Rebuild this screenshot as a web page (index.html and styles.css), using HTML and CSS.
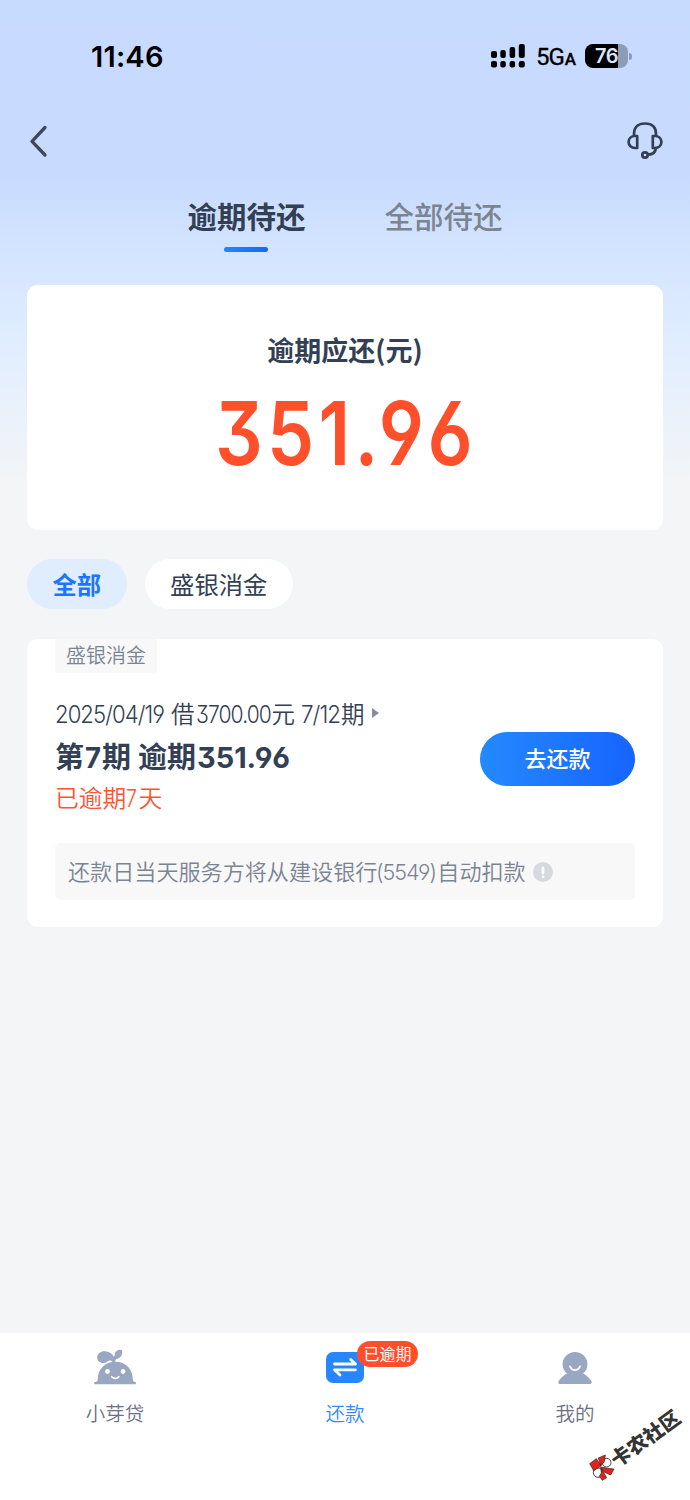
FILE: index.html
```html
<!DOCTYPE html>
<html lang="zh-CN">
<head>
<meta charset="utf-8">
<title>还款</title>
<link rel="stylesheet" href="styles.css">
</head>
<body>
<div class="app">
  <header class="status">
    <span class="clock">11:46</span>
    <div class="status-right">
      <svg class="signal" width="34" height="24" viewBox="0 0 34 24"><rect x="0" y="7" width="6" height="7" rx="2"/><rect x="9.3" y="6" width="5.5" height="8" rx="2"/><rect x="18.6" y="3" width="5.5" height="11" rx="2"/><rect x="27.8" y="0" width="6" height="14" rx="2"/><rect x="0" y="17" width="6" height="6.5" rx="2"/><rect x="9.3" y="17" width="5.5" height="6.5" rx="2"/><rect x="18.6" y="17" width="5.5" height="6.5" rx="2"/><rect x="27.8" y="17" width="6" height="6.5" rx="2"/></svg>
      <span class="network">5G<small>A</small></span>
      <span class="battery"><span>76</span></span><i class="battery-tip"></i>
    </div>
  </header>
  <nav class="toolbar">
    <svg width="20" height="34" viewBox="0 0 20 34" fill="none" stroke="#414855" stroke-width="3.3" stroke-linecap="round" stroke-linejoin="round"><path d="M17 3.5 4 17.3 17 31"/></svg>
    <svg width="36" height="38" viewBox="0 0 36 38" fill="none" stroke="#323f53" stroke-width="2.7" stroke-linecap="round" stroke-linejoin="round"><path d="M7 13v-1C7 5 11 1.500 18 1.500S29 5 29 12v1"/><path d="M10.2 14v12H8C4.4 26 1.600 23.500 1.600 20S4.400 14 8 14Z"/><path d="M25.800 14v12H28c3.600 0 6.400-2.500 6.400-6s-2.800-6-6.400-6Z"/><path d="M28.800 26.500c-.5 4.200-3 6-7.600 6.200"/><circle cx="18" cy="33" r="2.700"/></svg>
  </nav>
  <div class="tabs"><div class="tab active">逾期待还</div><div class="tab">全部待还</div></div>
  <main>
    <section class="summary">
      <h1>逾期应还(元)</h1>
      <svg class="amount" width="254" height="64" viewBox="0 0 254 64"><text x="-3" y="64" textLength="262" lengthAdjust="spacingAndGlyphs">351.96</text></svg>
    </section>
    <div class="filters"><span class="chip selected">全部</span><span class="chip">盛银消金</span></div>
    <section class="bill">
      <span class="lender">盛银消金</span>
      <div class="bill-row">
        <div class="details">
          <div class="loan"><svg class="num" width="110" height="17"><text y="17" textLength="109" lengthAdjust="spacingAndGlyphs">2025/04/19</text></svg><span class="word">借</span><svg class="num" width="77" height="17"><text x="1" y="17" textLength="75" lengthAdjust="spacingAndGlyphs">3700.00</text></svg><span>元</span><svg class="num part" width="40" height="17"><text y="17" textLength="39" lengthAdjust="spacingAndGlyphs">7/12</text></svg><span>期</span><i class="arrow"></i></div>
          <div class="term"><span>第</span><svg class="num" width="18" height="21"><text x="1" y="21" textLength="16" lengthAdjust="spacingAndGlyphs">7</text></svg><span>期</span><span class="word">逾期</span><svg class="num" width="94" height="21"><text x="1" y="21" textLength="93" lengthAdjust="spacingAndGlyphs">351.96</text></svg></div>
          <div class="late"><span>已逾期</span><svg class="num" width="12" height="17"><text y="17" textLength="11" lengthAdjust="spacingAndGlyphs">7</text></svg><span>天</span></div>
        </div>
        <button class="pay">去还款</button>
      </div>
      <div class="notice"><span>还款日当天服务方将从建设银行</span><svg class="num" width="60" height="16"><text x="-1" y="16" textLength="60" lengthAdjust="spacingAndGlyphs">(5549)</text></svg><span>自动扣款</span>
        <svg class="info" width="20" height="20" viewBox="0 0 20 20"><circle cx="10" cy="10" r="10" fill="#d6d9df"/><path d="M10 6v5" stroke="#fff" stroke-width="2.8" stroke-linecap="round"/><circle cx="10" cy="14.8" r="1.5" fill="#fff"/></svg>
      </div>
    </section>
  </main>
  <footer class="tabbar">
    <div class="item"><svg width="42" height="36" viewBox="0 0 42 36"><g fill="#99a7c2"><path d="M1.2 33c1.5 0 2.6-.8 2.600-3C3.800 20 11 12.700 21.300 12.700S38.800 20 38.800 30c0 2.200 1 3 2.200 3 1.300 0 1.300 2.300 0 2.300H1.200C-.2 35.300-.2 33 1.200 33Z"/><path d="M20.500 14.500C22.500 7.500 16.500 2.300 10.800 2.300 6.500 2.300 3.200 5 3.200 8.500c0 3.200 2.600 5.500 6 5.500 4.300 0 4.800-3.600 8-2.300 1.500.6 1.300 1.800 1.300 3Z"/><path d="M19.500 15c-1-4.500-.5-7 1.300-8.500C20.200 3 23.500.2 27.800 1c1.500 4.500-1.500 9-5.800 9-1 1.500-.8 3-.8 5Z"/></g><g fill="#fff"><circle cx="13.500" cy="22.500" r="2.400"/><circle cx="29" cy="22.500" r="2.400"/></g><path d="M17.700 27.700c1.800 2.200 5.300 2.200 7.100 0" fill="none" stroke="#fff" stroke-width="1.800" stroke-linecap="round"/></svg><span>小芽贷</span></div>
    <div class="item current"><span class="icon"><svg width="40" height="36" viewBox="0 0 40 36"><rect x="1" y="3" width="38" height="31" rx="7" fill="#2786ff"/><path d="M9.500 15H30.500L25.700 10.500M30.500 20.800H9.500L15 26" fill="none" stroke="#fff" stroke-width="2.800" stroke-linecap="round" stroke-linejoin="round"/></svg><b class="badge">已逾期</b></span><span>还款</span></div>
    <div class="item"><svg width="34" height="36" viewBox="0 0 34 36"><g fill="#99a7c2"><circle cx="17" cy="15.300" r="12.400"/><path d="M2.200 35C.2 35-.1 33.300 1 31.600 3.800 27.300 9 22.700 17 22.700s13.200 4.600 16 8.900c1.100 1.700.8 3.400-1.200 3.400Z"/></g><path d="M12 17.500c2 4.800 8 4.800 10 0" fill="none" stroke="#fff" stroke-width="1.900" stroke-linecap="round"/></svg><span>我的</span></div>
  </footer>
  <div class="watermark"><svg width="28" height="28" viewBox="145 356 84 84"><g fill="#fff" stroke="#222" stroke-width="2.500"><circle cx="201" cy="385" r="13"/><circle cx="175" cy="415" r="14"/></g><g fill="#e2231a" stroke="#222" stroke-width="2" stroke-linejoin="round"><path d="m150 388 20-15 14 22-22 14ZM176 371l21-9-3 20-11 13ZM184 398l20 4 19 2-10 18-20-9ZM183 399l8 14 10 17-13 8-9-12 6-10Z"/></g></svg><span>卡农社区</span></div>
</div>
</body>
</html>
```
FILE: styles.css
```css
* { box-sizing: border-box; }
body { margin: 0; }
.app { position: relative; width: 690px; height: 1500px; overflow: hidden; display: flex; flex-direction: column; color: #333f55; font-family: "Noto Sans CJK SC", sans-serif; background: linear-gradient(180deg, #c7daff 0, #c8dbff 175px, #d3e4ff 250px, #e0edff 340px, #f3f5f7 480px) #f3f5f7; }
.status { height: 112px; padding: 0 58px 0 91px; display: flex; align-items: center; justify-content: space-between; color: #000; }
.clock { padding-top: 1px; font: 600 29px/32px Inter, sans-serif; letter-spacing: .2px; }
.status-right { display: flex; align-items: center; }
.network { margin-left: 11px; padding-top: 3px; width: 40px; font: 400 24px/28px Roboto, sans-serif; letter-spacing: -1px; white-space: nowrap; -webkit-text-stroke: .3px #000; }
.network small { font-size: 17px; font-weight: 500; margin-left: 1px; }
.battery { margin-left: 9px; width: 43px; height: 24px; border-radius: 8px; background: linear-gradient(90deg, #000 33px, #8c9bb7 33px); color: #dae6ff; text-align: center; font: 600 20px/25px Inter, sans-serif; letter-spacing: -.5px; }
.battery-tip { width: 3px; height: 7px; margin-left: 1px; border-radius: 0 4px 4px 0; background: #8c9bb7; }
.toolbar { height: 76px; padding: 0 27px 18px 28px; display: flex; align-items: center; justify-content: space-between; }
.tabs { height: 97px; display: flex; justify-content: center; gap: 79px; }
.tab { position: relative; width: 118px; height: 64px; text-align: center; white-space: nowrap; font-size: 29.5px; line-height: 54px; font-weight: 500; color: #7c8490; }
.active { color: #333f55; font-weight: 700; }
.active::after { content: ""; position: absolute; left: 36px; bottom: 0; width: 44px; height: 5px; border-radius: 3px; background: linear-gradient(90deg, #2585ff, #1668ff); }
main { flex: 1; padding: 0 27px; }
.summary { height: 245px; padding-top: 45px; border-radius: 11px; background: #fff; text-align: center; }
h1 { margin: 0; font-size: 27px; line-height: 40px; font-weight: 700; }
.amount { display: block; overflow: visible; margin: 31px auto 0; fill: #ff4f2b; font: 600 88px Inter, sans-serif; font-feature-settings: "cv03", "cv04", "cv09"; letter-spacing: 5px; }
.filters { margin-top: 29px; display: flex; gap: 18px; }
.chip { height: 50px; padding: 0 25.5px; border-radius: 25px; background: #fff; font-size: 24.3px; line-height: 49px; }
.selected { color: #1976ff; background: #dfedff; font-weight: 700; }
.bill { height: 288px; margin-top: 30px; padding: 0 28px; border-radius: 11px; background: #fff; }
.lender { display: block; width: 102px; height: 34px; border-radius: 0 0 4px 4px; background: #f8f8f8; color: #7b8494; font-size: 20px; font-weight: 350; line-height: 32px; text-align: center; }
.bill-row { height: 170px; padding-top: 21px; display: flex; justify-content: space-between; }
.details { white-space: nowrap; }
.loan, .term, .late, .notice { display: flex; align-items: baseline; }
.num { overflow: visible; fill: currentColor; font-family: Inter, sans-serif; font-feature-settings: "cv03", "cv04", "cv09"; }
.loan .num, .notice .num { letter-spacing: -1px; }
.loan { height: 38px; font-size: 23.5px; line-height: 38px; font-weight: 350; }
.word, .part { margin-left: 6px; }
.term .word { margin-left: 7px; }
.arrow { align-self: center; margin-left: 7px; border-left: 7px solid #858d9c; border-top: 5.5px solid transparent; border-bottom: 5.5px solid transparent; }
.term { height: 46px; font-size: 29px; line-height: 46px; font-weight: 700; }
.late { height: 38px; color: #ff5431; font-size: 23.8px; line-height: 38px; font-weight: 350; }
.pay { margin-top: 38px; width: 155px; height: 54px; padding: 0 0 3px; border: 0; border-radius: 27px; color: #fff; background: linear-gradient(90deg, #238aff, #1764ff); font: 500 22px/51px "Noto Sans CJK SC", sans-serif; }
.notice { height: 57px; padding: 0 13px; border-radius: 5px; background: #f8f8f8; color: #7b8494; font-size: 22.1px; line-height: 55px; font-weight: 350; white-space: nowrap; }
.info { align-self: center; margin-left: 7px; }
.tabbar { height: 167px; padding: 16px 0 0; display: grid; grid-template-columns: repeat(3, 1fr); background: #fff; }
.item { display: flex; flex-direction: column; align-items: center; color: #687183; font-size: 19.5px; font-weight: 350; line-height: 28px; gap: 14px; }
.item svg { display: block; }
.current { color: #3489ff; }
.icon { position: relative; }
.badge { position: absolute; left: 32px; top: -8px; width: 61px; height: 26px; border-radius: 13px; color: #fff; background: #ff4e2b; font-size: 16px; line-height: 25px; font-weight: 400; text-align: center; }
.watermark { position: absolute; left: 588px; top: 1453px; width: 28px; height: 28px; }
.watermark span { position: absolute; left: 15px; top: -28px; width: 84px; color: #343434; font-size: 20px; line-height: 26px; font-weight: 900; text-align: center; white-space: nowrap; transform: rotate(-36deg); }
```
